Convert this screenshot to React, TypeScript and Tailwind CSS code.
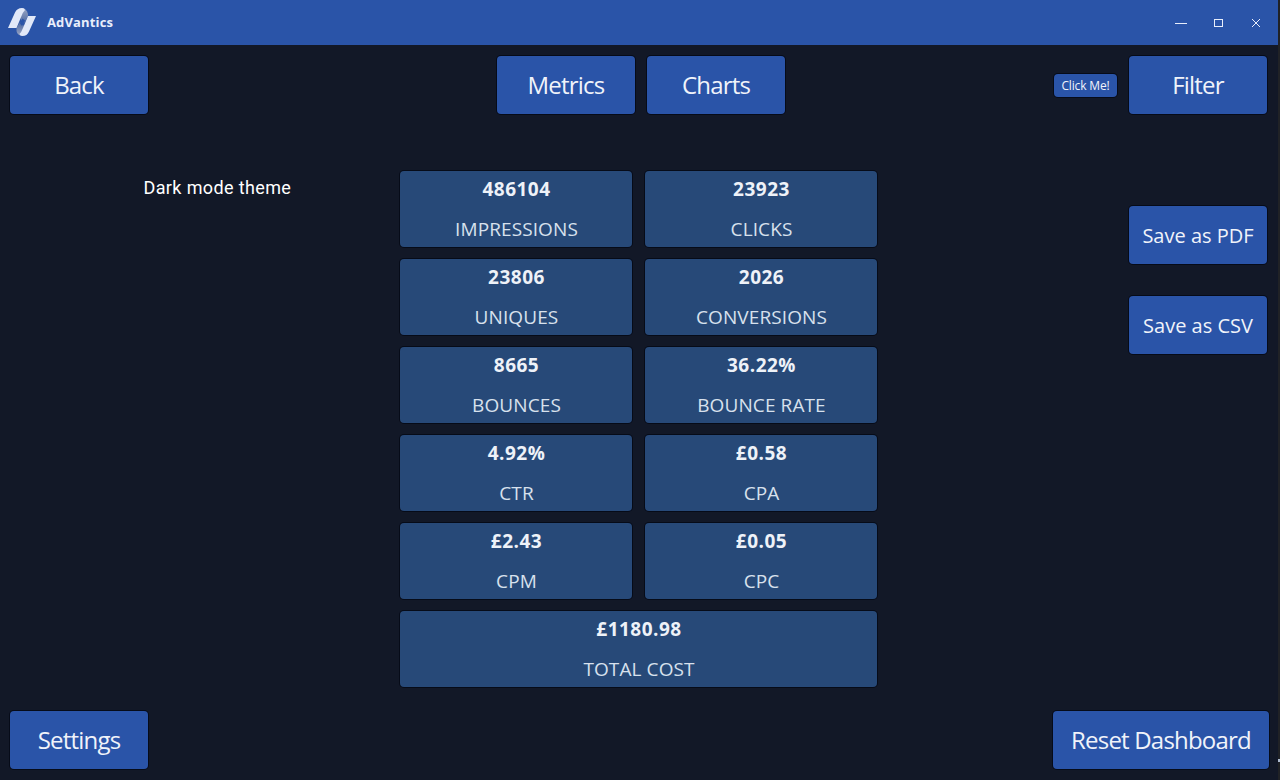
import React from "react";

const metrics = [
  { value: "486104", label: "IMPRESSIONS" },
  { value: "23923", label: "CLICKS" },
  { value: "23806", label: "UNIQUES" },
  { value: "2026", label: "CONVERSIONS" },
  { value: "8665", label: "BOUNCES" },
  { value: "36.22%", label: "BOUNCE RATE" },
  { value: "4.92%", label: "CTR" },
  { value: "£0.58", label: "CPA" },
  { value: "£2.43", label: "CPM" },
  { value: "£0.05", label: "CPC" },
  { value: "£1180.98", label: "TOTAL COST" },
];

function Button({
  children,
  className = "w-[138px] text-[24px] tracking-[-0.8px]",
}: {
  children: React.ReactNode;
  className?: string;
}) {
  return (
    <button
      className={`flex h-[58px] shrink-0 items-center justify-center whitespace-nowrap rounded-[4px] bg-[#2a54a8] text-[#f0f3fa] shadow-[0_0_0_1px_#060b18] ${className}`}
    >
      {children}
    </button>
  );
}

function Logo() {
  return (
    <svg width="30" height="30" viewBox="0 0 30 30" className="mb-px shrink-0">
      <defs>
        <linearGradient id="foldTop" x1="0" y1="0" x2="0" y2="1">
          <stop offset="0" stopColor="#9aa6c4" />
          <stop offset="1" stopColor="#4a66a0" />
        </linearGradient>
        <linearGradient id="foldBottom" x1="0" y1="0" x2="0" y2="1">
          <stop offset="0" stopColor="#4a66a0" />
          <stop offset="1" stopColor="#9aa6c4" />
        </linearGradient>
      </defs>
      <path d="M14 1Q18.500 1.500 20 7L20 9L16 17L12.500 12Z" fill="url(#foldTop)" />
      <path d="M12 15L16.500 19L14 29Q9 28 8.500 24L8.500 21Z" fill="url(#foldBottom)" />
      <path d="M14.500 11.500L17 13.500L14 19L12 16.500Z" fill="#2a54a8" />
      <path d="M0 21L7 5.500Q9 1 14 1Q16.500 1 17 3Q15 5 13.500 9L8.500 21Z" fill="#e1e8f8" />
      <path d="M20 9H28L21 24.500Q19 29 14.500 29Q12 29 11.500 27Q13.500 25 15 21Z" fill="#e1e8f8" />
    </svg>
  );
}

export default function App() {
  return (
    <div className="flex h-[780px] w-[1280px] overflow-hidden bg-[#202226] font-['Open_Sans','Noto_Sans',sans-serif] font-normal">
      <div className="flex w-[1278px] flex-col bg-[#121827]">
        <header className="flex h-[45px] shrink-0 items-center justify-between bg-[#2a54a8] pl-[8px] pr-[16px] text-[#e8eefb]">
          <div className="flex items-center gap-[9px]">
            <Logo />
            <span className="text-[13px] font-bold tracking-[0.15px]">AdVantics</span>
          </div>
          <svg width="88" height="12" viewBox="0 0 88 12" fill="none" stroke="#e8eefb" className="mt-px">
            <path d="M1 6.500H13" />
            <rect x="40.500" y="2.500" width="8" height="7" />
            <path d="M78 2L86 10M86 2L78 10" />
          </svg>
        </header>

        <nav className="grid shrink-0 grid-cols-[487px_288px_1fr] items-center pl-[10px] pr-[11px] pt-[11px]">
          <Button>Back</Button>
          <div className="flex gap-[12px]">
            <Button>Metrics</Button>
            <Button>Charts</Button>
          </div>
          <div className="flex items-center justify-end gap-[12px]">
            <button className="h-[23px] w-[63px] whitespace-nowrap rounded-[4px] bg-[#2a54a8] text-[12px] leading-[23px] tracking-[-0.15px] text-[#f0f3fa] shadow-[0_0_0_1px_#060b18]">
              Click Me!
            </button>
            <Button>Filter</Button>
          </div>
        </nav>

        <main className="flex flex-1 justify-between pr-[11px]">
          <div className="w-[400px] shrink-0 pl-[143.5px] pt-[62px] font-['Roboto',sans-serif] text-[18px] leading-[24px] tracking-[0.37px] text-white">
            Dark mode theme
          </div>
          <section className="grid w-[477px] shrink-0 grid-cols-2 content-start gap-x-[13px] gap-y-[12px] pt-[57px] text-center">
            {metrics.map((m) => (
              <div
                key={m.label}
                className="flex h-[76px] flex-col rounded-[4px] bg-[#274978] pt-[5px] text-[#eef2f8] shadow-[0_0_0_1px_#060b18] last:col-span-2"
              >
                <strong className="pl-px text-[19px] font-bold leading-[27px] tracking-[0.5px]">{m.value}</strong>
                <span className="pl-px pt-[13px] text-[19px] leading-[27px] tracking-[0.1px] text-[#d8e1ed]">
                  {m.label}
                </span>
              </div>
            ))}
          </section>
          <aside className="flex flex-1 flex-col items-end gap-[32px] pt-[92px]">
            <Button className="w-[138px] pt-[2px] text-[20px]">Save as PDF</Button>
            <Button className="w-[138px] pt-[2px] text-[20px]">Save as CSV</Button>
          </aside>
        </main>

        <footer className="flex shrink-0 justify-between pb-[11px] pl-[10px] pr-[9px]">
          <Button>Settings</Button>
          <Button className="w-[216px] text-[24px] tracking-[-0.8px]">Reset Dashboard</Button>
        </footer>
      </div>
      <div className="flex h-full w-[2px] items-end pb-[18px]">
        <div className="h-[3px] w-[2px] bg-[#aebbd0]" />
      </div>
    </div>
  );
}
